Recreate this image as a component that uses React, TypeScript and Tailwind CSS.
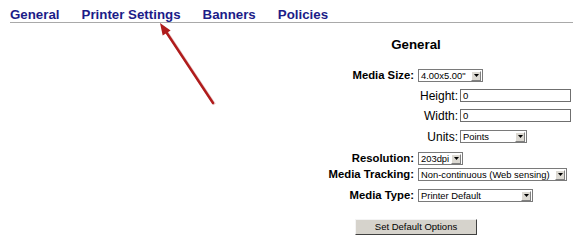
import React from "react";

const FONT = "font-['Liberation_Sans',Arial,sans-serif]";

// small dropdown that looks like the old windows classic select
const Select = ({ value, width }: { value: string; width: string }) => (
  <span className={`${width} h-[13px] flex items-center border border-[#7a7a7a] bg-white box-border`}>
    <span className="flex-1 pl-[2px] text-[9.4px] leading-none whitespace-nowrap text-black">
      {value}
    </span>
    <span className="w-[10px] h-[10px] mr-[1px] flex items-center justify-center bg-[#dcd9d2] border border-t-white border-l-white border-b-[#808080] border-r-[#808080] box-border">
      <svg width="5" height="3" viewBox="0 0 5 3">
        <polygon points="0,0 5,0 2.5,3" fill="#000" />
      </svg>
    </span>
  </span>
);

const TextInput = ({ value }: { value: string }) => (
  <span className="w-[111px] h-[13px] flex items-center border border-[#6f6f6f] bg-white box-border pl-[2px] text-[9.5px] leading-none text-black">
    {value}
  </span>
);

const FieldRow = ({
  label,
  mt,
  children,
}: {
  label: string;
  mt: string;
  children: React.ReactNode;
}) => (
  <div className={`flex items-center h-[13px] ${mt}`}>
    <span className="w-[90px] text-right font-bold text-[11.3px] leading-none whitespace-nowrap text-black">
      {label}
    </span>
    <span className="ml-[4px] flex">{children}</span>
  </div>
);

const SubRow = ({
  label,
  mt,
  children,
}: {
  label: string;
  mt: string;
  children: React.ReactNode;
}) => (
  <div className={`flex items-center h-[13px] ${mt} ml-[94px]`}>
    <span className="w-[40px] text-right text-[12px] leading-none whitespace-nowrap text-black">
      {label}
    </span>
    <span className="ml-[2px] flex">{children}</span>
  </div>
);

const App = () => {
  const tabs = ["General", "Printer Settings", "Banners", "Policies"];

  return (
    <div className={`relative w-[580px] h-[247px] bg-white overflow-hidden ${FONT}`}>
      {/* tab links */}
      <div className="ml-[10px] w-[563px] h-[23px] pt-[8px] border-b border-[#a9a9a9] box-border flex gap-[22px]">
        {tabs.map((t) => (
          <a key={t} className="text-[13.3px] leading-[14px] font-bold text-[#1c1c88] whitespace-nowrap">
            {t}
          </a>
        ))}
      </div>

      {/* form */}
      <div className="ml-[324px] w-[250px]">
        <div className="w-[184px] mt-[14px] h-[16px] text-center text-[13.3px] leading-[16px] font-bold text-black">
          General
        </div>

        <FieldRow label="Media Size:" mt="mt-[16px]">
          <Select value={'4.00x5.00"'} width="w-[65px]" />
        </FieldRow>
        <SubRow label="Height:" mt="mt-[7px]">
          <TextInput value="0" />
        </SubRow>
        <SubRow label="Width:" mt="mt-[7px]">
          <TextInput value="0" />
        </SubRow>
        <SubRow label="Units:" mt="mt-[8px]">
          <Select value="Points" width="w-[67px]" />
        </SubRow>
        <FieldRow label="Resolution:" mt="mt-[9px]">
          <Select value="203dpi" width="w-[45px]" />
        </FieldRow>
        <FieldRow label="Media Tracking:" mt="mt-[3px]">
          <Select value="Non-continuous (Web sensing)" width="w-[149px]" />
        </FieldRow>
        <FieldRow label="Media Type:" mt="mt-[8px]">
          <Select value="Printer Default" width="w-[115px]" />
        </FieldRow>

        <div className="w-[184px] mt-[17px] flex justify-center">
          <button className="w-[122px] h-[16px] bg-[#d6d3cc] border border-t-[#f4f4f4] border-l-[#f4f4f4] border-b-[#404040] border-r-[#404040] box-border text-[9.5px] leading-none text-black">
            Set Default Options
          </button>
        </div>
      </div>

      {/* annotation arrow pointing at the tab */}
      <svg className="absolute inset-0 pointer-events-none" width="580" height="247">
        <line x1="214.5" y1="104.5" x2="167" y2="32.5" stroke="#e6c4c4" strokeWidth="3" />
        <line x1="213" y1="103" x2="165.5" y2="31" stroke="#b01c1c" strokeWidth="2.4" strokeLinecap="round" />
        <polygon points="160,23 170.6,30.4 162.7,35.6" fill="#b01c1c" />
      </svg>
    </div>
  );
};

export default App;
